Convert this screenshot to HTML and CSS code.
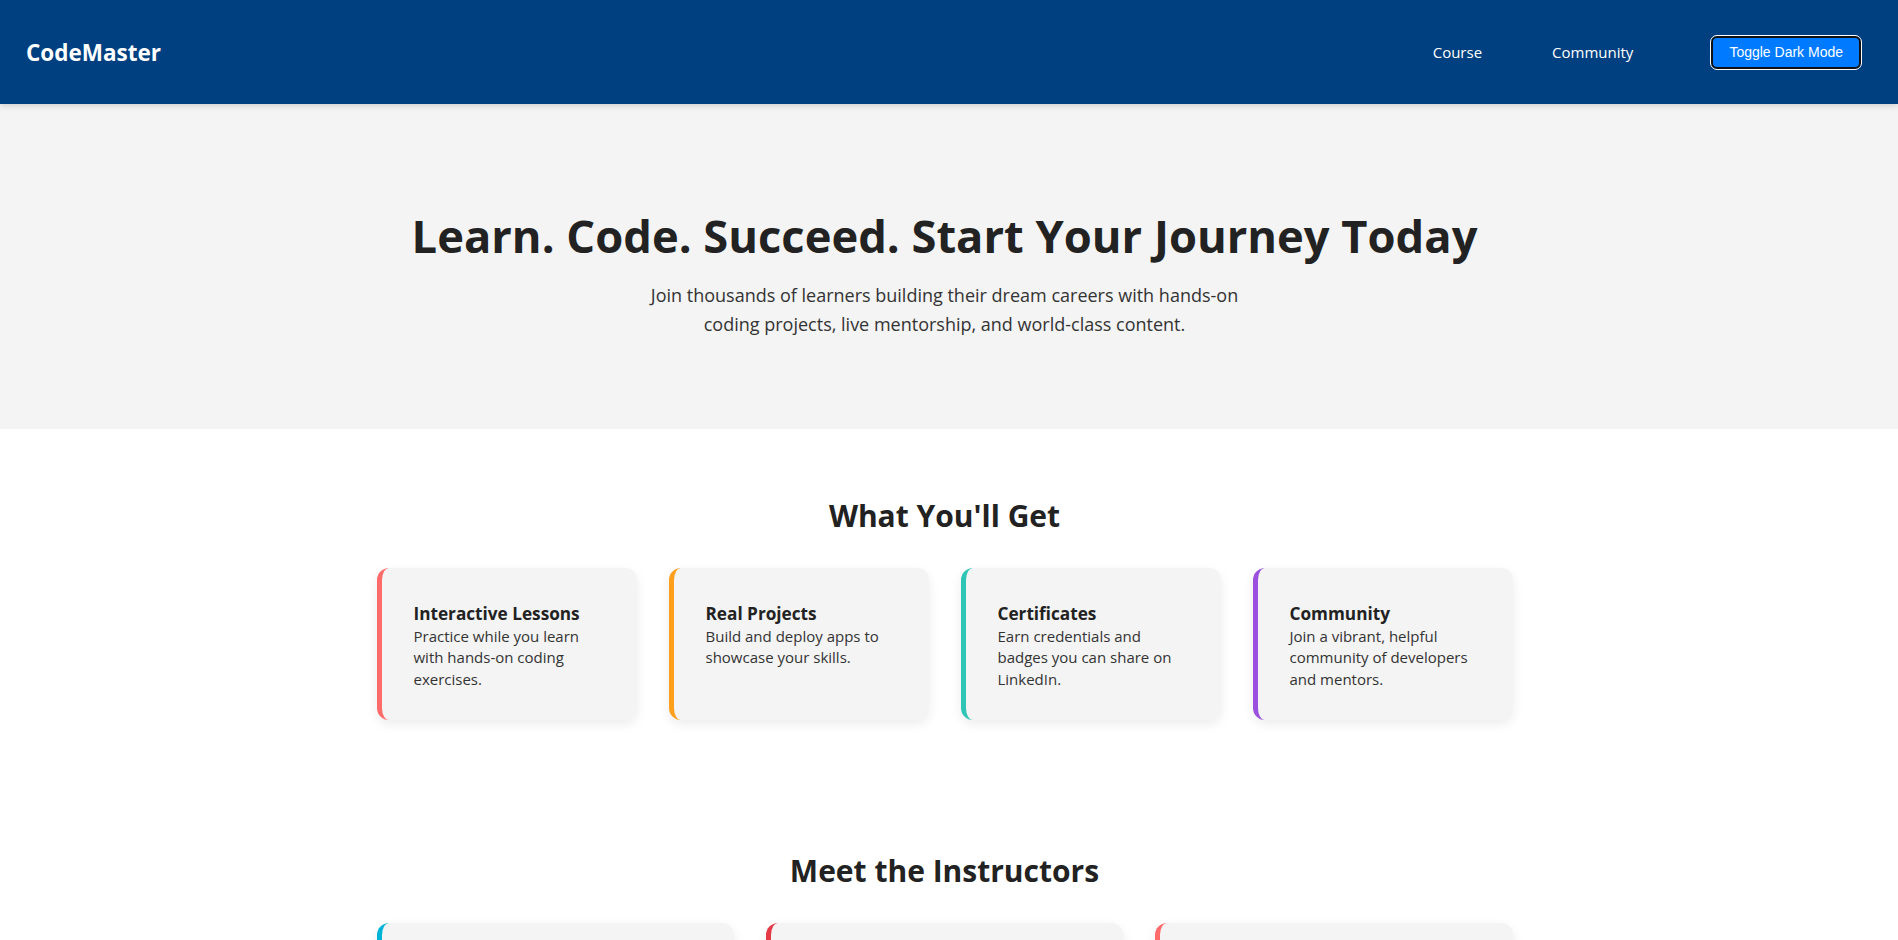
FILE: index.html
```html
<!DOCTYPE html>
<html lang="en">
<head>
<meta charset="utf-8">
<title>CodeMaster – Learn. Code. Succeed.</title>
<link rel="stylesheet" href="styles.css">
</head>
<body>
<header class="site-header">
  <div class="logo">CodeMaster</div>
  <nav class="main-nav">
    <a href="#course" class="nav-link">Course</a>
    <a href="#community" class="nav-link">Community</a>
    <button class="theme-toggle" type="button">Toggle Dark Mode</button>
  </nav>
</header>

<section class="hero">
  <h1 class="hero-title">Learn. Code. Succeed. Start Your Journey Today</h1>
  <p class="hero-text">Join thousands of learners building their dream careers with hands-on coding projects, live mentorship, and world-class content.</p>
</section>

<section class="section" id="course">
  <h2 class="section-title">What You'll Get</h2>
  <div class="grid grid-4">
    <div class="card accent-coral">
      <h3 class="card-title">Interactive Lessons</h3>
      <p class="card-text">Practice while you learn with hands-on coding exercises.</p>
    </div>
    <div class="card accent-orange">
      <h3 class="card-title">Real Projects</h3>
      <p class="card-text">Build and deploy apps to showcase your skills.</p>
    </div>
    <div class="card accent-teal">
      <h3 class="card-title">Certificates</h3>
      <p class="card-text">Earn credentials and badges you can share on LinkedIn.</p>
    </div>
    <div class="card accent-purple">
      <h3 class="card-title">Community</h3>
      <p class="card-text">Join a vibrant, helpful community of developers and mentors.</p>
    </div>
  </div>
</section>

<section class="section" id="community">
  <h2 class="section-title">Meet the Instructors</h2>
  <div class="grid grid-3">
    <div class="card accent-cyan">
      <h3 class="card-title">Sarah Chen</h3>
      <p class="card-text">Senior Frontend Engineer with 10 years of experience building web apps.</p>
    </div>
    <div class="card accent-red">
      <h3 class="card-title">Marcus Johnson</h3>
      <p class="card-text">Full-stack developer and open-source contributor who loves teaching.</p>
    </div>
    <div class="card accent-coral">
      <h3 class="card-title">Priya Patel</h3>
      <p class="card-text">Data engineer helping learners master Python, SQL and cloud tools.</p>
    </div>
  </div>
</section>

<section class="section section-alt">
  <h2 class="section-title">What Learners Say</h2>
  <div class="grid grid-3">
    <div class="card accent-teal">
      <p class="card-text">"The projects gave me a portfolio that landed me my first developer job."</p>
      <h3 class="card-title">— Alex R.</h3>
    </div>
    <div class="card accent-orange">
      <p class="card-text">"Live mentorship sessions made all the difference in my learning."</p>
      <h3 class="card-title">— Maria G.</h3>
    </div>
    <div class="card accent-purple">
      <p class="card-text">"Clear lessons, great community, and real-world content."</p>
      <h3 class="card-title">— Jordan K.</h3>
    </div>
  </div>
</section>

<footer class="site-footer">
  <p>© 2024 CodeMaster. All rights reserved.</p>
</footer>
</body>
</html>
```

FILE: styles.css
```css
html {
  scrollbar-width: thin;
}
::-webkit-scrollbar {
  width: 6px;
}
::-webkit-scrollbar-track {
  background: #fafafa;
}
::-webkit-scrollbar-thumb {
  background: #8c8c8c;
  border-radius: 3px;
}

* {
  box-sizing: border-box;
}

body {
  margin: 0;
  font-family: "Open Sans", "Noto Sans", sans-serif;
  color: #222;
  background: #fff;
}

.site-header {
  height: 104px;
  background: #004080;
  display: flex;
  align-items: center;
  justify-content: space-between;
  padding: 0 37px 0 26px;
  box-shadow: 0 2px 6px rgba(0, 0, 0, 0.15);
  position: relative;
  z-index: 1;
}

.logo {
  color: #fff;
  font-weight: 700;
  font-size: 22.5px;
}

.main-nav {
  display: flex;
  align-items: center;
}

.nav-link {
  color: #fff;
  text-decoration: none;
  font-size: 15px;
  margin-right: 70px;
}

.nav-link + .nav-link {
  margin-right: 78px;
}

.theme-toggle {
  font-family: "Liberation Sans", Arial, sans-serif;
  font-size: 14px;
  line-height: 15px;
  color: #fff;
  background: #007bff;
  border: 2px solid #111;
  outline: 1px solid #fff;
  border-radius: 6px;
  padding: 7px 16px;
  cursor: pointer;
}

.hero {
  background: #f4f4f4;
  padding: 105px 41px 90px 32px;
  text-align: center;
}

.hero-title {
  margin: 0 0 18px;
  font-size: 45.3px;
  line-height: 1.2;
  font-weight: 700;
  color: #222;
}

.hero-text {
  margin: 0 auto;
  max-width: 600px;
  font-size: 18px;
  line-height: 28.8px;
  color: #333;
}

.section {
  padding: 64px 41px 64px 32px;
}

.section-title {
  margin: 0 0 30px;
  text-align: center;
  font-size: 30px;
  line-height: 1.5;
  font-weight: 700;
  color: #222;
}

.grid {
  max-width: 1136px;
  margin: 0 auto;
  display: grid;
  gap: 32px;
}

.grid-4 {
  grid-template-columns: repeat(4, 1fr);
}

.grid-3 {
  grid-template-columns: repeat(3, 1fr);
}

.card {
  background: #f4f4f4;
  border-radius: 12px;
  border-left: 5px solid #ff6b6b;
  padding: 34px 32px 30px;
  box-shadow: 0 4px 12px rgba(0, 0, 0, 0.08);
}

.card-title {
  margin: 0;
  font-size: 17.2px;
  line-height: 24px;
  font-weight: 700;
  color: #222;
}

.card-text {
  margin: 0;
  font-size: 15px;
  line-height: 21.3px;
  color: #333;
}

.accent-coral { border-left-color: #ff6b6b; }
.accent-orange { border-left-color: #ff9f1c; }
.accent-teal { border-left-color: #2ec4b6; }
.accent-purple { border-left-color: #9b51e0; }
.accent-cyan { border-left-color: #00b4d8; }
.accent-red { border-left-color: #e63946; }

.section-alt {
  background: #f9f9f9;
}

.site-footer {
  background: #004080;
  color: #fff;
  text-align: center;
  padding: 24px;
  font-size: 14px;
}

.site-footer p {
  margin: 0;
}
```
